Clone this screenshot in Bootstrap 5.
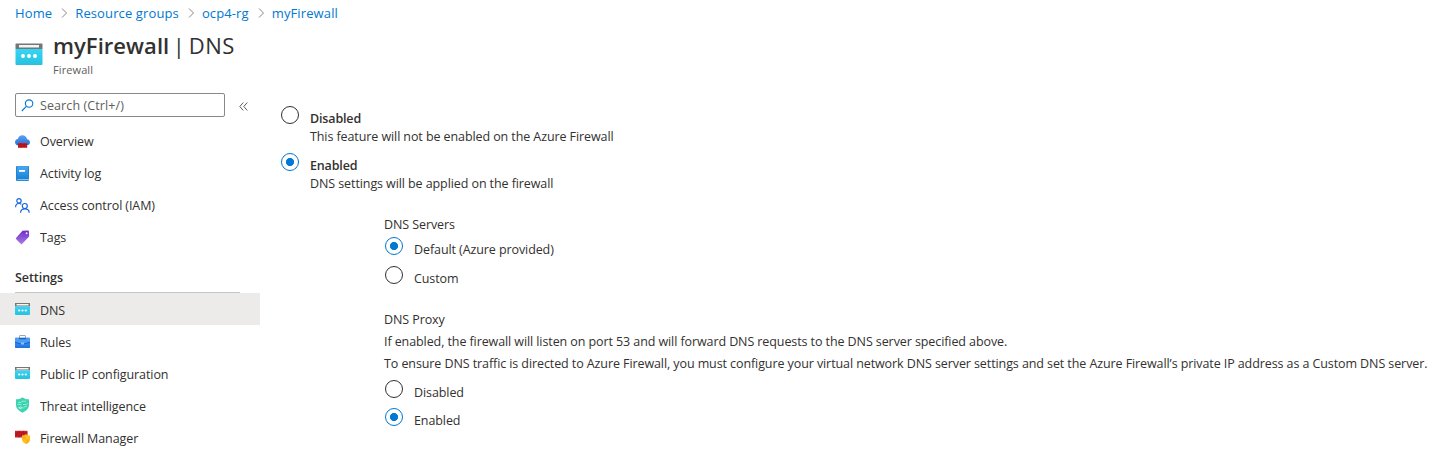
<!DOCTYPE html>
<html lang="en">
<head>
<meta charset="utf-8">
<meta name="viewport" content="width=device-width, initial-scale=1">
<title>myFirewall | DNS</title>
<link href="https://cdn.jsdelivr.net/npm/bootstrap@5.3.0/dist/css/bootstrap.min.css" rel="stylesheet">
<style>
body{font-family:"Open Sans","Noto Sans",sans-serif;font-size:12.5px;letter-spacing:-.09px;line-height:18px;color:#323130;overflow:hidden;white-space:nowrap}
.crumbs{height:26px;padding-left:15px;font-size:13px;letter-spacing:.12px}
.crumbs a{color:#0078d4;text-decoration:none}
.crumbs svg{margin:0 7px 0 9px}
.titlebar{height:59px;padding:6px 0 0 15px}
.titlebar h1{font-size:22px;line-height:26px;font-weight:600;letter-spacing:.05px;color:#323130}
.titlebar h1 span{font-weight:400;letter-spacing:.5px;word-spacing:-2.8px}
.titlebar svg{margin-top:11px}
.kind{font-size:11px;line-height:14px;color:#605e5c;letter-spacing:.1px;margin-top:5px}
.side{width:260px}
.searchrow{padding:8px 0 8px 15px}
.searchbox{width:210px;height:24px;border:1px solid #8a8886;border-radius:2px;color:#605e5c;padding-left:5px;gap:6px;letter-spacing:.1px}
.searchbox span{padding-top:2px}
.collapser{margin:2px 0 0 14px}
.item{height:32px;padding:2px 0 0 15px;gap:10px;color:#323130;text-decoration:none}
.item svg{flex:none;margin-top:-2px}
.item.active{background:#edebe9}
.lower .item{padding-top:4px}
.lower .item svg{margin-top:-4px}
.group{height:32px;margin:8px 20px 0 15px;padding-top:8px;border-bottom:1px solid #c8c6c4;font-weight:600;letter-spacing:-.05px}
.panel{padding:21px 0 0 21px}
.opt{gap:11px;height:29px}
.opt input{appearance:none;flex:none;width:18px;height:18px;margin:0;border:1px solid #323130;border-radius:50%;background:#fff}
.opt input:checked{border-color:#0078d4;background:radial-gradient(circle,#0078d4 3.7px,#fff 4.4px)}
.opt b{font-weight:600;letter-spacing:-.15px}
.opt.big{height:47px}
.opt .txt{padding-top:4px}
.nested{margin:6px 0 0 103px}
.nested .opt{margin-left:1px}
.servers{height:31px;padding-top:10px}
.proxy{padding-top:16px}
.proxy .line{height:22px}
.proxy .opt{height:28px}
.proxy .first{margin-top:3px}
</style>
</head>
<body class="bg-white">
<svg width="0" height="0" class="position-absolute">
<defs>
<linearGradient id="cy" x2="0" y2="1"><stop stop-color="#37d5f4"/><stop offset="1" stop-color="#27c1df"/></linearGradient>
<linearGradient id="bl" x2="0" y2="1"><stop stop-color="#4aa9ee"/><stop offset="1" stop-color="#1583d9"/></linearGradient>
<linearGradient id="cl" x2="0" y2="1"><stop stop-color="#659cf2"/><stop offset="1" stop-color="#1974de"/></linearGradient>
<linearGradient id="pu" x2="0" y2="1"><stop stop-color="#6a2bc6"/><stop offset="1" stop-color="#ab7be6"/></linearGradient>
<symbol id="dns" viewBox="0 0 15 12"><path fill="#767676" d="M0 0h15v3.500H0z"/><path fill="#f5f5f5" d="M1.500 1h12v1.500h-12z"/><path fill="url(#cy)" d="M0 3.500h15V11a1 1 0 0 1-1 1H1a1 1 0 0 1-1-1z"/><g fill="#fff"><circle cx="4.200" cy="7.500" r="1.100"/><circle cx="7.500" cy="7.500" r="1.100"/><circle cx="10.800" cy="7.500" r="1.100"/></g></symbol>
</defs>
</svg>

<nav aria-label="breadcrumb">
<div class="crumbs d-flex align-items-center">
<a href="#">Home</a><svg width="7" height="10" fill="none" stroke="#8a8886"><path d="M1 .5 5.500 5 1 9.500"/></svg>
<a href="#">Resource groups</a><svg width="7" height="10" fill="none" stroke="#8a8886"><path d="M1 .5 5.500 5 1 9.500"/></svg>
<a href="#">ocp4-rg</a><svg width="7" height="10" fill="none" stroke="#8a8886"><path d="M1 .5 5.500 5 1 9.500"/></svg>
<a href="#">myFirewall</a>
</div>
</nav>

<header class="titlebar d-flex">
<svg width="28" height="22" viewBox="0 0 28 22"><path fill="#767676" d="M.5 1q0-.5.5-.5h26q.5 0 .5.500v5H.5z"/><path fill="#f5f5f5" d="M4 2h20v2.500H4z"/><path fill="url(#cy)" d="M.5 6h27v15q0 1-1 1h-25q-1 0-1-1z"/><g fill="#fff"><circle cx="8" cy="13" r="2"/><circle cx="14" cy="13" r="2"/><circle cx="20" cy="13" r="2"/></g></svg>
<div class="title-text" style="margin-left:10px"><h1 class="mb-0">myFirewall<span> | DNS</span></h1><div class="kind">Firewall</div></div>
</header>

<div class="d-flex">
<aside class="side flex-shrink-0">
<div class="searchrow d-flex align-items-center">
<div class="searchbox d-flex align-items-center"><svg width="13" height="13" fill="none" stroke="#0078d4" stroke-width="1.100"><circle cx="8.100" cy="4.600" r="3.700"/><path d="M5.400 7.300.8 12"/></svg><span>Search (Ctrl+/)</span></div>
<svg class="collapser" width="9" height="9" fill="none" stroke="#605e5c"><path d="M4.300.5.8 4.500l3.500 4M8.300.5 4.800 4.500l3.500 4"/></svg>
</div>
<nav>
<a href="#" class="item d-flex align-items-center"><svg width="15" height="15" viewBox="0 0 15 15"><path fill="url(#cl)" d="M3.500 11.300A3.400 3.400 0 0 1 0 8.200C0 6.500 1.200 5.200 2.800 5 3.400 2.800 5.200 1.200 7.400 1.200c2.500 0 4.300 1.700 4.700 4 1.700.2 2.900 1.500 2.900 3 0 1.800-1.400 3.100-3.300 3.100z"/><path fill="#cd1c22" d="M3 9h9.200v4.800H3z"/><path stroke="#8f1218" stroke-width=".6" d="M3 10.600h9M3 12.200h9M6 9v1.600m3 0v1.600m-3 0v1.600"/></svg>Overview</a>
<a href="#" class="item d-flex align-items-center"><svg width="15" height="15" viewBox="0 0 15 15"><rect x="1" width="13" height="15" rx="1" fill="#2583cf"/><path fill="#9fcff2" d="M2.500 13.200H14v.9H2.500z"/><rect x="2" y=".3" width="11" height="12.700" rx=".8" fill="url(#bl)"/><path fill="#fff" d="M4 4h6v1.800H4z"/></svg>Activity log</a>
<a href="#" class="item d-flex align-items-center"><svg width="15" height="15" viewBox="0 0 15 15" fill="none" stroke="#1665e0" stroke-width="1.200"><circle cx="4" cy="2.800" r="2.200"/><path d="M.6 9.200C.6 6.600 2 5.500 4 5.500c1 0 1.700.2 2.300.7"/><circle cx="9.800" cy="8" r="2.500"/><path d="M5.600 14.800c0-2.700 1.700-4 4.200-4s4.400 1.300 4.400 4"/></svg>Access control (IAM)</a>
<a href="#" class="item d-flex align-items-center"><svg width="15" height="15" viewBox="0 0 15 15"><path fill="url(#pu)" d="M7.500.8 13 .5q.8 0 .9.800l.2 4.600q0 .6-.4 1L7 14.100q-.5.500-1 0L1 8.900q-.4-.5 0-1z"/><circle cx="11.600" cy="3.200" r="1" fill="#f0e4fb"/><path d="m3.200 7.800 4.500-4" stroke="#8f58d8" stroke-width=".8"/></svg>Tags</a>
</nav>
<div class="group">Settings</div>
<nav class="lower">
<a href="#" class="item active d-flex align-items-center"><svg width="15" height="12"><use href="#dns"/></svg>DNS</a>
<a href="#" class="item d-flex align-items-center"><svg width="15" height="13" viewBox="0 0 15 13"><path d="M4.500 3V1q0-.5.500-.5h5q.5 0 .5.500v2" fill="none" stroke="#a5a5a5"/><rect y="2.500" width="15" height="10.500" rx=".8" fill="url(#cl)"/><path fill="#4d9df2" d="M0 3h15v3.500L9 8.500H6L0 6.500z"/><path fill="#1a5fc4" d="M0 6.800 5.500 8.400h4L15 6.800v.9L9.500 9.200h-4L0 7.700zM4 3h7v1.200H4z"/><path fill="#83c9fb" d="M6 7.500h3v2H6z"/></svg>Rules</a>
<a href="#" class="item d-flex align-items-center"><svg width="15" height="12"><use href="#dns"/></svg>Public IP configuration</a>
<a href="#" class="item d-flex align-items-center"><svg width="15" height="16" viewBox="0 0 15 16"><path fill="#3dd3b0" d="M7.500.3C9.500 2 11.500 2.300 14 2.300V8c0 3.700-3 6-6.500 7.700C4 14 1 11.700 1 8V2.300c2.500 0 4.500-.3 6.500-2z"/><path d="M3 5.500h3l1-1.300h4M2.500 7.500h4M8 7.500h3.500l1-1.500M3 10.800h2M6.500 10.800h2L10 9.500h2" fill="none" stroke="#b5f3e3" stroke-width=".7"/><circle cx="5.500" cy="10.800" r="1" fill="none" stroke="#d9fff5" stroke-width=".7"/></svg>Threat intelligence</a>
<a href="#" class="item d-flex align-items-center"><svg width="15" height="15" viewBox="0 0 15 15"><path fill="#d0202a" d="M0 .8h12.500v6.700H0z"/><path d="M0 3h12.500M0 5.200h12.500M4 .8V3m4.500-2.200V3M2 3v2.200M6.500 3v2.200M4 5.200v2.300" stroke="#8b141a" stroke-width=".6"/><path fill="#ffc41f" d="M11 4.200c1.300 1 2.500 1.200 4 1.200v3.800c0 2.300-1.700 3.800-4 4.800-2.300-1-4-2.500-4-4.800V5.400c1.500 0 2.700-.2 4-1.200z"/><path fill="#f9a01e" d="M11 4.200v5H7V5.400c1.500 0 2.700-.2 4-1.200zM11 9.200h4c0 2.300-1.700 3.800-4 4.800z" opacity=".55"/></svg>Firewall Manager</a>
</nav>
</aside>

<main class="panel">
<label class="opt big d-flex"><input type="radio" name="dns"><span class="txt"><b class="d-block">Disabled</b>This feature will not be enabled on the Azure Firewall</span></label>
<label class="opt big d-flex"><input type="radio" name="dns" checked><span class="txt"><b class="d-block">Enabled</b>DNS settings will be applied on the firewall</span></label>
<section class="nested">
<div class="servers">DNS Servers</div>
<label class="opt d-flex"><input type="radio" name="srv" checked><span class="txt">Default (Azure provided)</span></label>
<label class="opt d-flex"><input type="radio" name="srv"><span class="txt">Custom</span></label>
<div class="proxy">
<div class="line">DNS Proxy</div>
<div class="line">If enabled, the firewall will listen on port 53 and will forward DNS requests to the DNS server specified above.</div>
<div class="line">To ensure DNS traffic is directed to Azure Firewall, you must configure your virtual network DNS server settings and set the Azure Firewall’s private IP address as a Custom DNS server.</div>
<label class="opt first d-flex"><input type="radio" name="proxy"><span class="txt">Disabled</span></label>
<label class="opt d-flex"><input type="radio" name="proxy" checked><span class="txt">Enabled</span></label>
</div>
</section>
</main>
</div>
<script src="https://cdn.jsdelivr.net/npm/bootstrap@5.3.0/dist/js/bootstrap.bundle.min.js"></script>
</body>
</html>
